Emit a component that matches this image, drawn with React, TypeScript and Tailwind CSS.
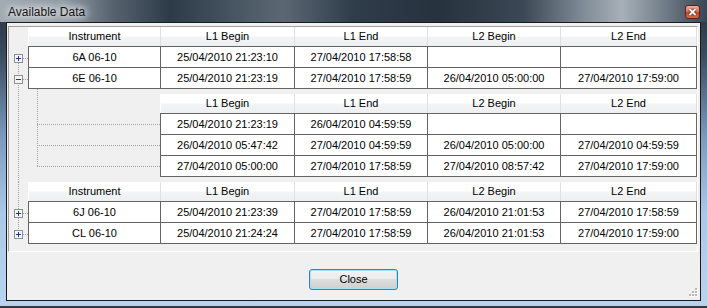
import React from "react";

type Sign = "+" | "-";

const widths = ["w-[132px]", "w-[134px]", "w-[133px]", "w-[133px]", "w-[137px]"];
const detailWidths = ["w-[134px]", "w-[133px]", "w-[133px]", "w-[137px]"];
const dot = "#a3a3a3";

const topRows = [
  ["6A 06-10", "25/04/2010 21:23:10", "27/04/2010 17:58:58", "", ""],
  ["6E 06-10", "25/04/2010 21:23:19", "27/04/2010 17:58:59", "26/04/2010 05:00:00", "27/04/2010 17:59:00"],
];

const detailRows = [
  ["25/04/2010 21:23:19", "26/04/2010 04:59:59", "", ""],
  ["26/04/2010 05:47:42", "27/04/2010 04:59:59", "26/04/2010 05:00:00", "27/04/2010 04:59:59"],
  ["27/04/2010 05:00:00", "27/04/2010 17:58:59", "27/04/2010 08:57:42", "27/04/2010 17:59:00"],
];

const bottomRows = [
  ["6J 06-10", "25/04/2010 21:23:39", "27/04/2010 17:58:59", "26/04/2010 21:01:53", "27/04/2010 17:58:59"],
  ["CL 06-10", "25/04/2010 21:24:24", "27/04/2010 17:58:59", "26/04/2010 21:01:53", "27/04/2010 17:59:00"],
];

function Header({ titles, w }: { titles: string[]; w: string[] }) {
  return (
    <div className="flex h-[19px]">
      {titles.map((t, i) => (
        <div
          key={i}
          className={`${w[i]} h-full flex items-center justify-center border-l ${i === 0 ? "border-white" : "border-[#dfe0e1]"} ${i === titles.length - 1 ? "border-r border-r-[#dfe0e1]" : ""} bg-[linear-gradient(to_bottom,#ffffff_0%,#ffffff_45%,#f3f4f5_55%,#eeeff0_100%)]`}
        >
          {t}
        </div>
      ))}
    </div>
  );
}

function Rows({ rows, w }: { rows: string[][]; w: string[] }) {
  return (
    <div className="border-b border-[#646464] w-fit">
      {rows.map((r, ri) => (
        <div key={ri} className="flex h-[21px]">
          {r.map((c, i) => (
            <div
              key={i}
              className={`${w[i]} h-full flex items-center justify-center bg-white border-t border-l border-[#646464] ${i === r.length - 1 ? "border-r" : ""}`}
            >
              {c}
            </div>
          ))}
        </div>
      ))}
    </div>
  );
}

function Tree({ signs, from, to }: { signs: Sign[]; from: number; to: number }) {
  return (
    <svg width="19" height="62" className="block shrink-0">
      <line x1="9.5" y1={from} x2="9.5" y2={to} stroke={dot} strokeDasharray="1 1" />
      {signs.map((s, i) => {
        const y = 19 + i * 21 + 8;
        return (
          <g key={i}>
            <line x1="14" y1={y + 4.5} x2="19" y2={y + 4.5} stroke={dot} strokeDasharray="1 1" />
            <rect x="5.5" y={y + 0.5} width="8" height="8" fill="#f4f4f4" stroke="#8e8f8f" />
            <line x1="7" y1={y + 4.5} x2="12" y2={y + 4.5} stroke="#1c3a8c" />
            {s === "+" && <line x1="9.5" y1={y + 2} x2="9.5" y2={y + 7} stroke="#1c3a8c" />}
          </g>
        );
      })}
    </svg>
  );
}

export default function App() {
  const titles = ["Instrument", "L1 Begin", "L1 End", "L2 Begin", "L2 End"];

  return (
    <div className="w-[707px] h-[308px] flex flex-col border-b-2 border-[#3a3a3a] bg-[linear-gradient(to_bottom,#26313c_0%,#3a4c5f_18%,#7b9bbf_45%,#abc8e8_70%,#bad4ef_100%)] font-['Liberation_Sans',Arial,sans-serif] text-black">
      {/* title bar */}
      <div className="h-[22px] shrink-0 flex items-start bg-[linear-gradient(90deg,#a1aab2_0%,#8e99a3_9%,#56636f_16%,#2d3a48_24%,#44525f_32%,#5b6874_40%,#2f3c4a_50%,#26323e_62%,#3b4855_74%,#7c8893_82%,#a7b0b8_88%,#5e6b77_96%,#3a4653_100%)]">
        <div className="pl-[8px] pt-[4px] text-[12px] leading-[16px] text-[#151515] [text-shadow:0_0_6px_#ffffff,0_0_10px_#ffffff,0_0_14px_#e8ecef]">
          Available Data
        </div>
        <div className="ml-auto mr-[7px] mt-[5px] w-[15px] h-[14px] rounded-[3px] border border-[#5b2418] bg-[linear-gradient(to_bottom,#eeb0a0_0%,#d9755d_45%,#c4432a_55%,#d4664a_100%)] flex items-center justify-center">
          <svg width="9" height="8" viewBox="0 0 9 8">
            <path d="M1.5 1 L7.5 7 M7.5 1 L1.5 7" stroke="#5a2a20" strokeWidth="3.2" />
            <path d="M1.5 1 L7.5 7 M7.5 1 L1.5 7" stroke="#ffffff" strokeWidth="1.8" />
          </svg>
        </div>
      </div>

      {/* client area */}
      <div className="mx-[6px] h-[279px] shrink-0 border border-[#1b1b1b] bg-[#f0f0f0] relative flex flex-col text-[11px] leading-none">
        <div className="ml-[1px] mr-[2px] mt-[3px] h-[226px] border border-t-[#a0a0a0] border-l-[#a0a0a0] border-r-white border-b-white bg-[#f0f0f0] flex flex-col">
          {/* first group */}
          <div className="flex">
            <Tree signs={["+", "-"]} from={36} to={62} />
            <div>
              <Header titles={titles} w={widths} />
              <Rows rows={topRows} w={widths} />
            </div>
          </div>

          {/* expanded detail of 6E */}
          <div className="flex h-[93px]">
            <svg width="19" height="93" className="block shrink-0">
              <line x1="9.5" y1="0" x2="9.5" y2="93" stroke={dot} strokeDasharray="1 1" />
            </svg>
            <svg width="132" height="93" className="block shrink-0">
              <line x1="9.5" y1="0" x2="9.5" y2="78" stroke={dot} strokeDasharray="1 1" />
              <line x1="9" y1="35.5" x2="132" y2="35.5" stroke={dot} strokeDasharray="1 1" />
              <line x1="9" y1="56.5" x2="132" y2="56.5" stroke={dot} strokeDasharray="1 1" />
              <line x1="9" y1="77.5" x2="132" y2="77.5" stroke={dot} strokeDasharray="1 1" />
            </svg>
            <div className="pt-[5px]">
              <Header titles={titles.slice(1)} w={detailWidths} />
              <Rows rows={detailRows} w={detailWidths} />
            </div>
          </div>

          {/* second group */}
          <div className="flex">
            <Tree signs={["+", "+"]} from={0} to={48} />
            <div>
              <Header titles={titles} w={widths} />
              <Rows rows={bottomRows} w={widths} />
            </div>
          </div>
        </div>

        <button className="mx-auto mt-[17px] w-[89px] h-[21px] rounded-[3px] border border-[#3c7fb1] shadow-[inset_0_0_0_1px_#9fe2f9] bg-[linear-gradient(to_bottom,#f2f2f2_0%,#ebebeb_50%,#dddddd_50%,#cfcfcf_100%)] text-[11px] flex items-center justify-center">
          Close
        </button>

        {/* size grip */}
        <svg width="10" height="10" className="absolute right-[2px] bottom-[2px]">
          {[
            [7, 0],
            [4, 3],
            [7, 3],
            [1, 6],
            [4, 6],
            [7, 6],
          ].map(([x, y], i) => (
            <g key={i}>
              <rect x={x + 1} y={y + 1} width="2" height="2" fill="#ffffff" />
              <rect x={x} y={y} width="2" height="2" fill="#b8b8b8" />
            </g>
          ))}
        </svg>
      </div>
    </div>
  );
}
